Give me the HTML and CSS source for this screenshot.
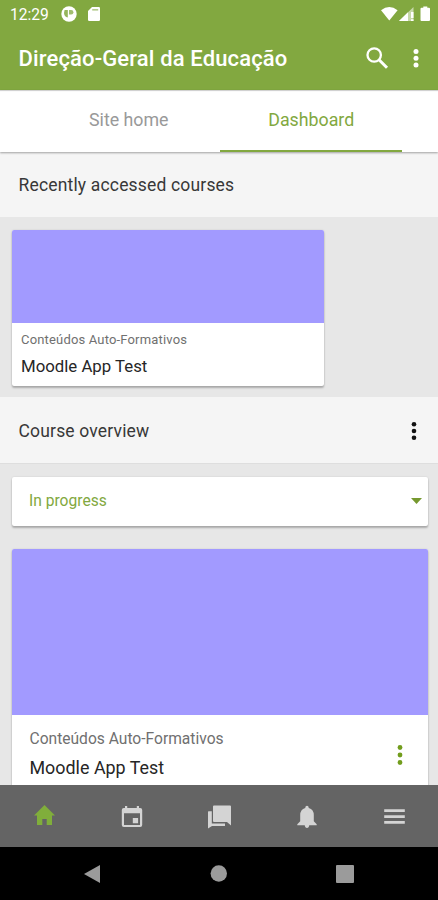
FILE: index.html
```html
<!DOCTYPE html>
<html lang="en">
<head>
<meta charset="utf-8">
<title>Direção-Geral da Educação</title>
<link rel="stylesheet" href="styles.css">
</head>
<body>
<div class="screen">
  <header class="top">
    <div class="status">
      <span class="clock">12:29</span>
      <svg class="st-round" width="16" height="16" viewBox="0 0 16 16"><circle cx="8" cy="8" r="7.7" fill="#fff"/><path d="M8 4h2.200a2.200 2.200 0 0 1 0 4.400H8z" fill="#82a840" fill-opacity=".75"/><path d="M3.600 4h3.200v7.600C4.400 11 3 9.200 3 7z" fill="#82a840" fill-opacity=".85"/></svg>
      <svg class="st-sd" width="12" height="14" viewBox="0 0 12 14"><path d="M4 0h6.800q1.200 0 1.200 1.200v11.600q0 1.200-1.200 1.200H1.200Q0 14 0 12.800V4z" fill="#fff"/><path d="M4.200 2.800h6" stroke="#82a840" stroke-opacity=".6" stroke-width="1.600"/></svg>
      <span class="grow"></span>
      <svg width="50" height="16" viewBox="0 0 50 16" fill="#fff"><path d="M0 4.200Q8.300-2.400 16.600 4.200L8.300 14.500z"/><path d="M18 15L32.500 1v14z" fill-opacity=".55"/><path d="M18 15l9-8.700V15z"/><path d="M30 6h2.500v6H30zM30 13.200h2.500V15H30z"/><path d="M42.300 1.800V.5h4v1.300h1.700q1 0 1 1V14q0 1-1 1h-7.500q-1 0-1-1V2.800q0-1 1-1z"/></svg>
    </div>
    <div class="bar">
      <h1>Direção-Geral da Educação</h1>
      <svg width="24" height="24" viewBox="0 0 24 24" fill="none" stroke="#fff"><circle cx="9.200" cy="9" r="6.700" stroke-width="2.300"/><path d="M14 13.800l8 8" stroke-width="3"/></svg>
      <svg class="bar-more" width="6" height="20" viewBox="0 0 6 20" fill="#fff"><circle cx="3" cy="3.500" r="2.500"/><circle cx="3" cy="10.300" r="2.500"/><circle cx="3" cy="17.100" r="2.500"/></svg>
    </div>
  </header>
  <nav class="tabs"><span class="tab home">Site home</span><span class="tab active">Dashboard</span></nav>
  <main>
    <h2 class="section first"><span class="t-recent">Recently accessed courses</span></h2>
    <div class="recent">
      <article class="card small">
        <div class="cover"></div>
        <p class="cat">Conteúdos Auto-Formativos</p>
        <p class="name">Moodle App Test</p>
      </article>
    </div>
    <h2 class="section second"><span class="t-overview">Course overview</span>
      <svg width="6" height="20" viewBox="0 0 6 20" fill="#111"><circle cx="3" cy="3.300" r="2.300"/><circle cx="3" cy="10" r="2.300"/><circle cx="3" cy="16.700" r="2.300"/></svg>
    </h2>
    <div class="overview">
      <div class="select"><span>In progress</span><svg width="11" height="6" viewBox="0 0 11 6"><path d="M0 0h11L5.500 6z" fill="#76992f"/></svg></div>
      <article class="card big">
        <div class="cover"></div>
        <div class="info">
          <div><p class="cat">Conteúdos Auto-Formativos</p><p class="name">Moodle App Test</p></div>
          <svg width="6" height="22" viewBox="0 0 6 22" fill="#729d1d"><circle cx="3" cy="3.500" r="2.400"/><circle cx="3" cy="11" r="2.400"/><circle cx="3" cy="18.500" r="2.400"/></svg>
        </div>
      </article>
    </div>
  </main>
  <nav class="tabbar">
    <span class="item"><svg width="24" height="24" viewBox="0 0 24 24" fill="#80ae3b"><path d="M11.500 0L1 10.500h3V20h5.300v-6h4.400v6H19v-9.500h3z"/></svg></span>
    <span class="item"><svg width="24" height="24" viewBox="0 0 24 24"><path fill="#d4d4d4" fill-rule="evenodd" d="M5 1h2.200v2h9.600V1H19v2h1.200q2 0 2 2v15q0 2-2 2H3.800q-2 0-2-2V5q0-2 2-2H5zM4 8.300V20h16V8.300zM12.800 13h5.300v5.200h-5.300z"/></svg></span>
    <span class="item"><svg width="24" height="24" viewBox="0 0 24 24" fill="#d4d4d4"><path d="M6 .5h16q1 0 1 1v19l-4-3.500H6q-1 0-1-1V1.500q0-1 1-1z"/><path d="M.5 6.200h3.300v12.300H17V21H4L0 23.500V6.700z"/></svg></span>
    <span class="item"><svg width="24" height="24" viewBox="0 0 24 24" fill="#d4d4d4"><path d="M12 .7q1.600 0 1.800 2.200Q18.800 4.500 18.800 10v6.200l2.900 3v1H2.300v-1l2.900-3V10q0-5.500 5-7.100Q10.400.7 12 .7zM9.700 20h4.600q-.3 3-2.300 3T9.700 20z"/></svg></span>
    <span class="item"><svg width="24" height="24" viewBox="0 0 24 24" fill="#d4d4d4"><path d="M2.200 4.300h20.600v2.700H2.200zM2.200 10.200h20.600v2.700H2.200zM2.200 16h20.600v2.700H2.200z"/></svg></span>
  </nav>
  <footer class="sysnav">
    <svg width="16" height="18" viewBox="0 0 16 18" fill="#9b9b9b"><path d="M16 0v18L0 9z"/></svg>
    <svg width="17" height="17" viewBox="0 0 17 17" fill="#9b9b9b"><circle cx="8.800" cy="8.500" r="8.200"/></svg>
    <svg width="18" height="18" viewBox="0 0 18 18" fill="#9b9b9b"><rect width="18" height="18" rx="1"/></svg>
  </footer>
</div>
</body>
</html>
```
FILE: styles.css
```css
* { box-sizing: border-box; }
body, h1, h2, p { margin: 0; }
body { font-family: Roboto, sans-serif; color: #383838; }
svg { display: block; flex: none; }
.screen { width: 438px; height: 900px; display: flex; flex-direction: column; overflow: hidden; background: #e7e7e7; }

.top { flex: none; height: 90px; background: #82a840; color: #fff; }
.status { height: 28px; display: flex; align-items: center; padding: 0 7px 0 10px; }
.clock { font-size: 15.6px; width: 51px; padding-top: 1px; white-space: nowrap; }
.st-sd { margin-left: 11px; }
.grow { flex: 1; }
.bar { height: 60px; display: flex; align-items: center; padding: 0 19px 0 18.500px; }
.bar h1 { flex: 1; font-size: 22px; font-weight: 500; letter-spacing: .14px; white-space: nowrap; }
.bar-more { margin-left: 24px; }

.tabs { flex: none; height: 62px; display: flex; padding: 0 36px 0 37px; background: #fff; box-shadow: 0 1px 2px rgba(0, 0, 0, .35), inset 0 2px 1px -1px rgba(0, 0, 0, .2); position: relative; }
.tab { flex: 1; text-align: center; font-size: 17.8px; line-height: 59px; color: #999; }
.tab.home { padding-left: 1px; }
.tab.active { padding-left: 1px; color: #82a840; border-bottom: 2px solid #82a840; }

main { flex: 1; min-height: 0; overflow: hidden; }
.section { display: flex; align-items: center; justify-content: space-between; padding: 0 21.500px 0 18.500px; font-size: 17.5px; font-weight: 400; background: #f5f5f5; }
.first { height: 65px; padding-top: 1px; letter-spacing: .17px; }
.second { height: 67px; padding-top: 1px; border-bottom: 1px solid #dedede; letter-spacing: .17px; }
.card, .select { background: #fff; border-radius: 2px; box-shadow: 0 2px 2px rgba(0, 0, 0, .25), 0 0 2px rgba(0, 0, 0, .12); }
.cover { background: #a29aff; border-radius: 2px 2px 0 0; }
.cat { color: #707070; }
.name { color: #262626; }
.recent { height: 180px; padding: 13px 12px; }
.small { width: 312px; height: 156px; }
.small .cover { height: 93px; }
.small .cat { font-size: 13px; letter-spacing: .17px; line-height: 18px; padding: 8px 9px 0; }
.small .name { font-size: 16.800px; line-height: 24px; padding: 5px 9px 0; }

.overview { padding: 13px 10.500px 0 12px; }
.select { height: 49px; display: flex; align-items: center; justify-content: space-between; padding: 0 6px 2px 17px; font-size: 15.6px; color: #82a840; }
.big { margin-top: 23px; height: 260px; }
.big .cover { height: 166px; }
.info { display: flex; justify-content: space-between; padding: 12px 25px 0 17.500px; }
.info svg { margin-top: 17px; }
.big .cat { font-size: 15.6px; line-height: 24px; }
.big .name { font-size: 17.900px; line-height: 24px; margin-top: 5px; }

.tabbar { flex: none; height: 62px; display: flex; padding-left: 1px; background: #646464; }
.item { flex: 1; display: flex; justify-content: center; padding-top: 20px; }
.sysnav { flex: none; height: 53px; display: flex; align-items: center; justify-content: space-between; padding: 0 84px; background: #000; }
```
